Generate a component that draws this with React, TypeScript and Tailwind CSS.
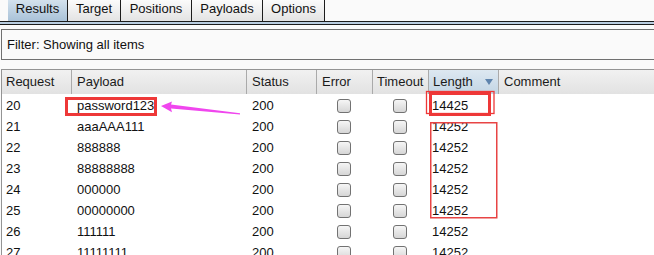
import React from "react";

const rows: [string, string, string, string][] = [
  ["20", "password123", "200", "14425"],
  ["21", "aaaAAA111", "200", "14252"],
  ["22", "888888", "200", "14252"],
  ["23", "88888888", "200", "14252"],
  ["24", "000000", "200", "14252"],
  ["25", "00000000", "200", "14252"],
  ["26", "111111", "200", "14252"],
  ["27", "11111111", "200", "14252"],
];

const tabs = [
  { label: "Results", w: "w-[60px]", active: true },
  { label: "Target", w: "w-[53px]", active: false },
  { label: "Positions", w: "w-[71px]", active: false },
  { label: "Payloads", w: "w-[71px]", active: false },
  { label: "Options", w: "w-[62px]", active: false },
];

function Box() {
  return (
    <div className="w-[14px] h-[14px] rounded-[3px] border border-[#727272] bg-gradient-to-b from-[#f6f6f6] to-[#d6d6d6]" />
  );
}

const cols = "grid grid-cols-[69px_175px_70px_56px_56px_70px_1fr]";

export default function App() {
  return (
    <div
      className="relative w-[654px] h-[255px] overflow-hidden bg-[#fafafa] text-[13px] text-[#111]"
      style={{ fontFamily: '"Liberation Sans", Arial, sans-serif' }}
    >
      {/* Tabs */}
      <div className="flex h-[21px] pl-[8px]">
        {tabs.map((t) => (
          <div
            key={t.label}
            className={`${t.w} h-full flex justify-center leading-[17px] border-r border-[#1c1c1c] ${
              t.active
                ? "bg-gradient-to-b from-[#d3e1ed] to-[#a9c2d8]"
                : "bg-gradient-to-b from-[#fbfbfb] to-[#e3e3e3]"
            }`}
          >
            {t.label}
          </div>
        ))}
      </div>
      <div className="h-[1px] bg-[#1c1c1c]" />
      <div className="h-[2px] bg-[#b9cde0]" />
      <div className="h-[1px] bg-[#1c1c1c]" />

      {/* Filter */}
      <div className="mt-[4px] ml-[1px] h-[31px] border-t border-b border-l border-[#707070] bg-[#fafafa] flex items-center pl-[5px]">
        Filter: Showing all items
      </div>

      {/* Table */}
      <div className="mt-[9px] ml-[1px] border-t border-l border-[#949494] bg-white">
        <div className={`${cols} h-[24px] bg-gradient-to-b from-[#f1f1f1] to-[#e2e2e2] text-[#1a1a1a]`}>
          <div className="pl-[4px] flex items-center">Request</div>
          <div className="pl-[5px] flex items-center border-l border-[#aaaaaa]">Payload</div>
          <div className="pl-[5px] flex items-center border-l border-[#aaaaaa]">Status</div>
          <div className="pl-[5px] flex items-center border-l border-[#aaaaaa]">Error</div>
          <div className="pl-[4px] flex items-center border-l border-[#aaaaaa]">Timeout</div>
          <div className="pl-[4px] flex items-center justify-between pr-[4px] border-l border-[#aaaaaa] bg-gradient-to-b from-[#dde8f1] to-[#c3d5e4]">
            <span>Length</span>
            <svg width="10" height="8" viewBox="0 0 10 8">
              <polygon points="1,1 9,1 5,7" fill="#5f84ad" />
            </svg>
          </div>
          <div className="pl-[5px] flex items-center border-l border-[#aaaaaa]">Comment</div>
        </div>
        <div className="h-[1px]" />
        {rows.map(([req, payload, status, len]) => (
          <div key={req} className={`${cols} h-[21px] items-center`}>
            <div className="pl-[4px]">{req}</div>
            <div className="pl-[6px]">{payload}</div>
            <div className="pl-[6px]">{status}</div>
            <div className="flex justify-center">
              <Box />
            </div>
            <div className="flex justify-center">
              <Box />
            </div>
            <div className="pl-[4px]">{len}</div>
            <div />
          </div>
        ))}
      </div>

      {/* Annotations */}
      <svg
        className="absolute left-0 top-0 pointer-events-none"
        width="654"
        height="255"
        viewBox="0 0 654 255"
      >
        <rect x="66.5" y="98.5" width="89" height="16" fill="none" stroke="#ee3838" strokeWidth="3" />
        <rect x="430.5" y="93.5" width="59" height="21" fill="none" stroke="#ee3838" strokeWidth="3" />
        <rect x="426.5" y="91.5" width="67.5" height="22" fill="none" stroke="#ee3838" strokeWidth="1.3" />
        <rect x="430.75" y="122.75" width="66" height="95" fill="none" stroke="#e84444" strokeWidth="1.5" />
        <polygon
          points="161,106 172,101.5 171,104.6 240,113.2 240,114.6 171,108.4 172,112.2"
          fill="#f046ee"
        />
      </svg>
    </div>
  );
}
